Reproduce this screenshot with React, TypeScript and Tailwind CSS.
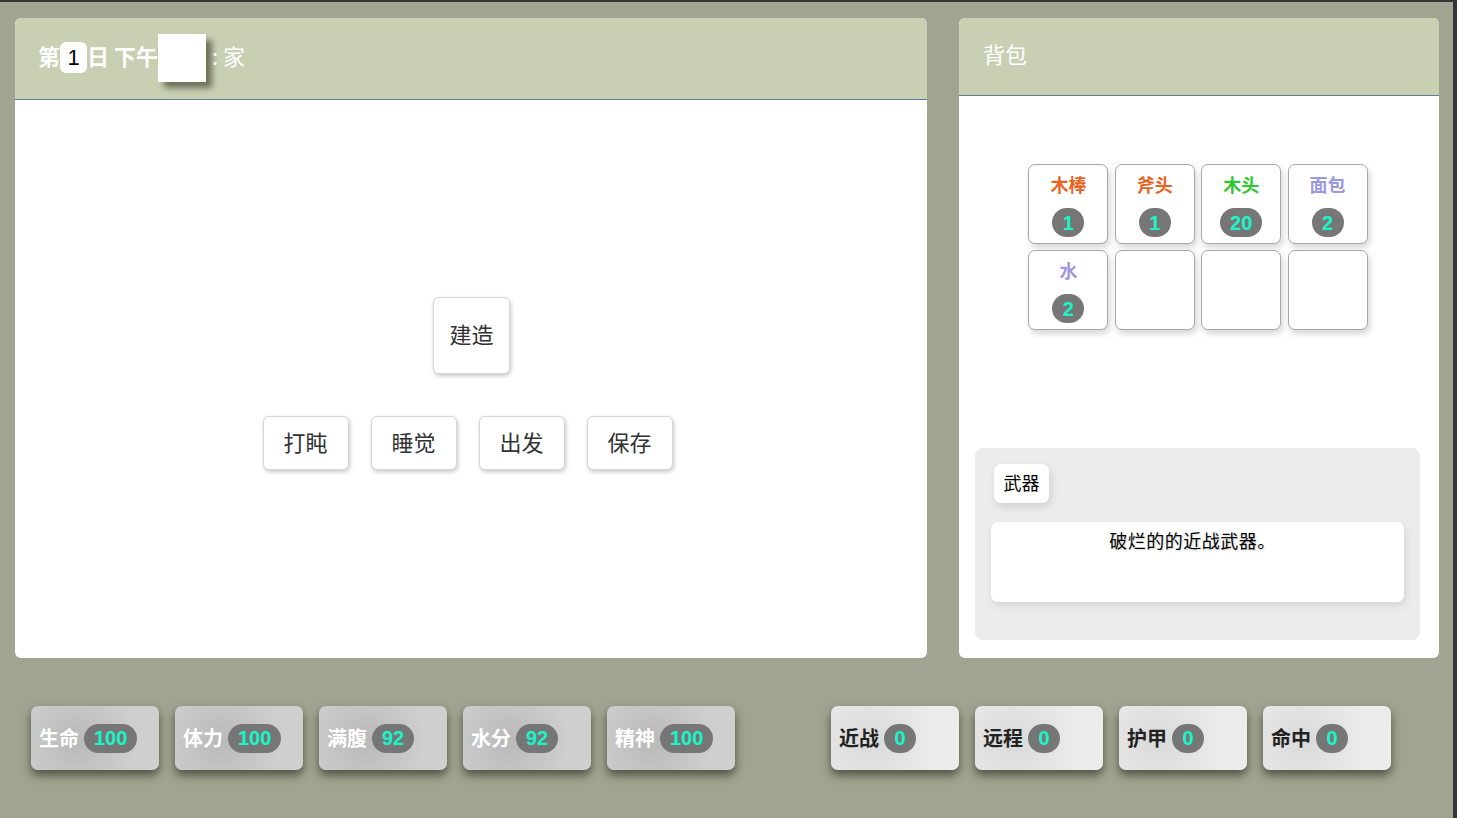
import React from "react";

const CJK = '"Noto Sans CJK SC", "Liberation Sans", sans-serif';
const NUM = '"Liberation Sans", "Noto Sans CJK SC", sans-serif';

type Item = { name: string; color: string; count: number } | null;

const items: Item[] = [
  { name: "木棒", color: "#e8641e", count: 1 },
  { name: "斧头", color: "#e8641e", count: 1 },
  { name: "木头", color: "#2fc62f", count: 20 },
  { name: "面包", color: "#9b98e0", count: 2 },
  { name: "水", color: "#9b98e0", count: 2 },
  null,
  null,
  null,
];

const leftStats = [
  { label: "生命", value: 100 },
  { label: "体力", value: 100 },
  { label: "满腹", value: 92 },
  { label: "水分", value: 92 },
  { label: "精神", value: 100 },
];

const rightStats = [
  { label: "近战", value: 0 },
  { label: "远程", value: 0 },
  { label: "护甲", value: 0 },
  { label: "命中", value: 0 },
];

function Badge({ value }: { value: number }) {
  return (
    <span
      className="inline-flex items-center justify-center h-[29px] min-w-[32px] px-[10px] rounded-full bg-[#767676] text-[#1af5c8] font-bold text-[20px]"
      style={{ fontFamily: NUM }}
    >
      {value}
    </span>
  );
}

function ActionButton({ label, big }: { label: string; big?: boolean }) {
  return (
    <div
      className={`flex items-center justify-center bg-white border border-[#d6d6d6] rounded-[6px] shadow-[1px_2px_4px_rgba(0,0,0,0.22)] text-[22px] text-[#333] ${
        big ? "w-[77px] h-[77px] pb-[4px]" : "w-[86px] h-[54px] pb-[3px]"
      }`}
    >
      {label}
    </div>
  );
}

export default function App() {
  return (
    <div
      className="w-full h-[818px] bg-[#a0a591] border-t-2 border-r-4 border-[#353535] overflow-hidden flex flex-col"
      style={{ fontFamily: CJK }}
    >
      {/* top row */}
      <div className="flex gap-[32px] pl-[15px] pt-[16px]">
        {/* left panel */}
        <div className="w-[912px] h-[640px] bg-white rounded-[6px] overflow-hidden flex flex-col">
          <div className="h-[82px] bg-[#c8cfb3] border-b border-[#5a7f99] flex items-center pl-[23px] text-white text-[22px] shrink-0">
            <span className="font-bold mb-[6px]">第</span>
            <span
              className="inline-flex items-center justify-center w-[27px] h-[31px] bg-white rounded-[6px] text-black font-normal mb-[2px]"
              style={{ fontFamily: NUM }}
            >
              1
            </span>
            <span className="font-bold mb-[6px]">日 下午</span>
            <span className="inline-block w-[48px] h-[48px] bg-white shadow-[6px_6px_6px_rgba(80,80,60,0.75)] mt-[-2px]"></span>
            <span className="ml-[6px] mb-[6px]">: 家</span>
          </div>
          <div className="flex-1 flex flex-col items-center pt-[197px] pl-[1px]">
            <ActionButton label="建造" big />
            <div className="flex gap-[22px] mt-[42px] mr-[8px]">
              <ActionButton label="打盹" />
              <ActionButton label="睡觉" />
              <ActionButton label="出发" />
              <ActionButton label="保存" />
            </div>
          </div>
        </div>

        {/* right panel */}
        <div className="w-[480px] h-[640px] bg-white rounded-[6px] overflow-hidden flex flex-col">
          <div className="h-[78px] bg-[#c8cfb3] border-b border-[#5a7f99] flex items-center pl-[24px] pb-[6px] text-white text-[22px] shrink-0">
            背包
          </div>
          <div className="flex-1 flex flex-col">
            <div className="flex justify-center pt-[68px] pr-[2px]">
              <div className="grid grid-cols-4 gap-[6.4px]">
                {items.map((it, i) => (
                  <div
                    key={i}
                    className="w-[80px] h-[80px] bg-white border border-[#a8a8a8] rounded-[7px] shadow-[2px_4px_6px_rgba(0,0,0,0.16)] flex flex-col items-center"
                  >
                    {it && (
                      <>
                        <span className="mt-[7px] text-[18px] font-bold leading-[24px]" style={{ color: it.color }}>
                          {it.name}
                        </span>
                        <span className="mt-[12px] flex">
                          <Badge value={it.count} />
                        </span>
                      </>
                    )}
                  </div>
                ))}
              </div>
            </div>
            <div className="mt-[118px] ml-[16px] w-[445px] h-[192px] bg-[#ececec] rounded-[8px] px-[16px] pt-[16px]">
              <div className="inline-flex items-center justify-center w-[55px] h-[39px] bg-white rounded-[7px] shadow-[2px_4px_8px_rgba(0,0,0,0.12)] text-[18px] text-black ml-[3px] pb-[2px]">
                武器
              </div>
              <div className="mt-[19px] w-[413px] h-[80px] bg-white rounded-[7px] shadow-[2px_4px_8px_rgba(0,0,0,0.1)] text-center text-[18px] text-black pt-[5px] pr-[10px] tracking-[0.5px] [text-shadow:1px_1px_2px_rgba(0,0,0,0.2)]">
                破烂的的近战武器。
              </div>
            </div>
          </div>
        </div>
      </div>

      {/* bottom stats */}
      <div className="flex mt-[48px]">
        <div className="flex gap-[16px] ml-[31px]">
          {leftStats.map((s) => (
            <div
              key={s.label}
              className="w-[128px] h-[64px] rounded-[7px] bg-[radial-gradient(circle_at_35%_55%,#b9b9b9,#cfcfcf_70%)] shadow-[0_5px_10px_rgba(20,25,10,0.6)] flex items-center pl-[8px] gap-[5px]"
            >
              <span className="text-white font-bold text-[20px] mb-[1px]">{s.label}</span>
              <Badge value={s.value} />
            </div>
          ))}
        </div>
        <div className="flex gap-[16px] ml-[96px]">
          {rightStats.map((s) => (
            <div
              key={s.label}
              className="w-[128px] h-[64px] rounded-[7px] bg-[radial-gradient(circle_at_30%_55%,#d9d9d9,#ececec_70%)] shadow-[0_5px_10px_rgba(20,25,10,0.6)] flex items-center pl-[8px] gap-[5px]"
            >
              <span className="text-[#222] font-bold text-[20px] mb-[1px]">{s.label}</span>
              <Badge value={s.value} />
            </div>
          ))}
        </div>
      </div>
    </div>
  );
}
